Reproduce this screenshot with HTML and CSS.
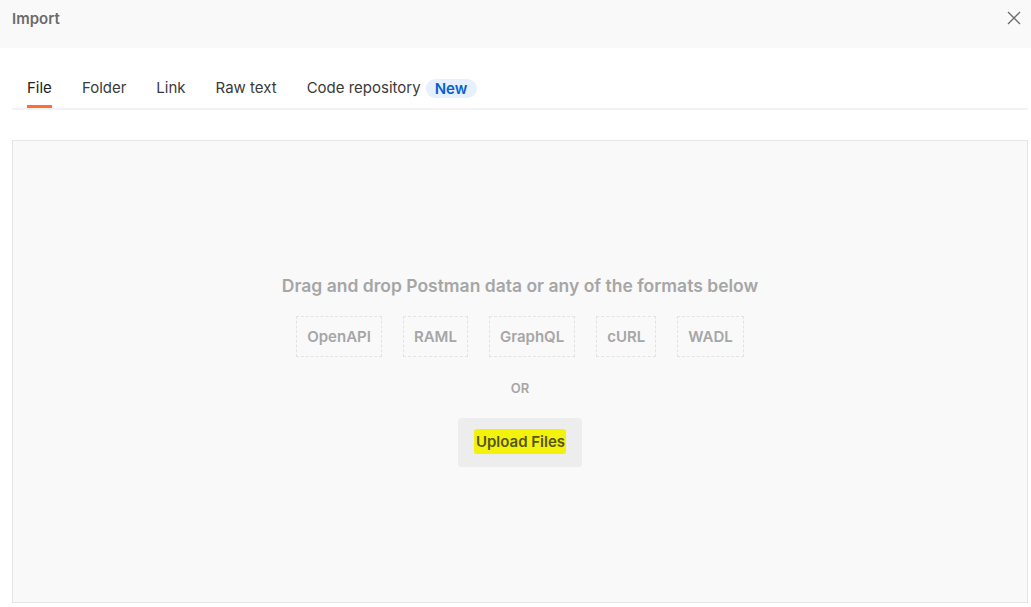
FILE: index.html
```html
<!DOCTYPE html>
<html lang="en">
<head>
<meta charset="utf-8">
<title>Import</title>
<link rel="stylesheet" href="styles.css">
</head>
<body>
<div class="modal">
  <header class="modal-header">
    <h1 class="modal-title">Import</h1>
    <button class="close-btn" aria-label="Close">
      <svg width="14" height="14" viewBox="0 0 14 14"><path d="M1 1 L13 13 M13 1 L1 13" stroke="#6b6b6b" stroke-width="1.3" fill="none"/></svg>
    </button>
  </header>
  <nav class="tabs">
    <div class="tab active"><span class="tab-label">File</span></div>
    <div class="tab"><span class="tab-label">Folder</span></div>
    <div class="tab"><span class="tab-label">Link</span></div>
    <div class="tab"><span class="tab-label">Raw text</span></div>
    <div class="tab"><span class="tab-label">Code repository <span class="badge">New</span></span></div>
  </nav>
  <section class="dropzone">
    <p class="drop-title">Drag and drop Postman data or any of the formats below</p>
    <div class="formats">
      <span class="format">OpenAPI</span>
      <span class="format">RAML</span>
      <span class="format">GraphQL</span>
      <span class="format">cURL</span>
      <span class="format">WADL</span>
    </div>
    <p class="or">OR</p>
    <button class="upload-btn"><span class="highlight">Upload Files</span></button>
  </section>
</div>
</body>
</html>
```

FILE: styles.css
```css
* { box-sizing: border-box; }
html, body {
  margin: 0;
  padding: 0;
  background: #ffffff;
  font-family: Inter, "Noto Sans", "Liberation Sans", sans-serif;
}
.modal {
  width: 1031px;
  height: 607px;
  display: flex;
  flex-direction: column;
}
.modal-header {
  height: 48px;
  background: #f9f9f9;
  display: flex;
  justify-content: space-between;
  align-items: flex-start;
  padding: 8px 6px 0 12px;
}
.modal-title {
  margin: 0;
  font-size: 15px;
  line-height: 21px;
  font-weight: 600;
  color: #6b6b6b;
}
.close-btn {
  border: 0;
  background: transparent;
  padding: 3px 4px;
  display: flex;
  cursor: pointer;
}
.tabs {
  margin: 20px 3px 0 12px;
  display: flex;
  border-bottom: 2px solid #f3f3f3;
}
.tab {
  margin: 0 15px;
  padding-top: 10px;
  font-size: 15px;
  line-height: 20px;
  color: #3a3a3a;
}
.tab-label {
  display: flex;
  align-items: center;
  padding-bottom: 7px;
  border-bottom: 3px solid transparent;
}
.tab.active .tab-label { border-bottom-color: #ff6c37; color: #212121; }
.badge {
  margin-left: 5px;
  background: #e7f0fd;
  color: #0b5fcc;
  font-weight: 600;
  font-size: 15px;
  line-height: 19px;
  padding: 0 10px 0 9px;
  border-radius: 10px;
}
.dropzone {
  margin: 30px 3px 4px 12px;
  flex: 1;
  background: #f9f9f9;
  border: 1px solid #e6e6e6;
  display: flex;
  flex-direction: column;
  align-items: center;
  justify-content: center;
  padding-bottom: 2px;
}
.drop-title {
  margin: 0;
  font-size: 17.5px;
  line-height: 24px;
  font-weight: 600;
  color: #a6a6a6;
}
.formats {
  margin-top: 18px;
  display: flex;
  gap: 21px;
}
.format {
  border: 1px dashed #e3e3e3;
  padding: 10px 10px;
  font-size: 15px;
  line-height: 19px;
  font-weight: 600;
  color: #a6a6a6;
}
.or {
  margin: 23px 0 0;
  font-size: 13px;
  line-height: 16px;
  font-weight: 600;
  color: #a6a6a6;
}
.upload-btn {
  margin-top: 22px;
  border: 0;
  border-radius: 4px;
  background: #ededed;
  padding: 14px 16px 15px;
  font-family: inherit;
  font-size: 15px;
  line-height: 20px;
  font-weight: 600;
  color: #55551a;
}
.highlight {
  background: #f2f20c;
  padding: 3px 1px 3px 2px;
  border-radius: 3px;
}
```
